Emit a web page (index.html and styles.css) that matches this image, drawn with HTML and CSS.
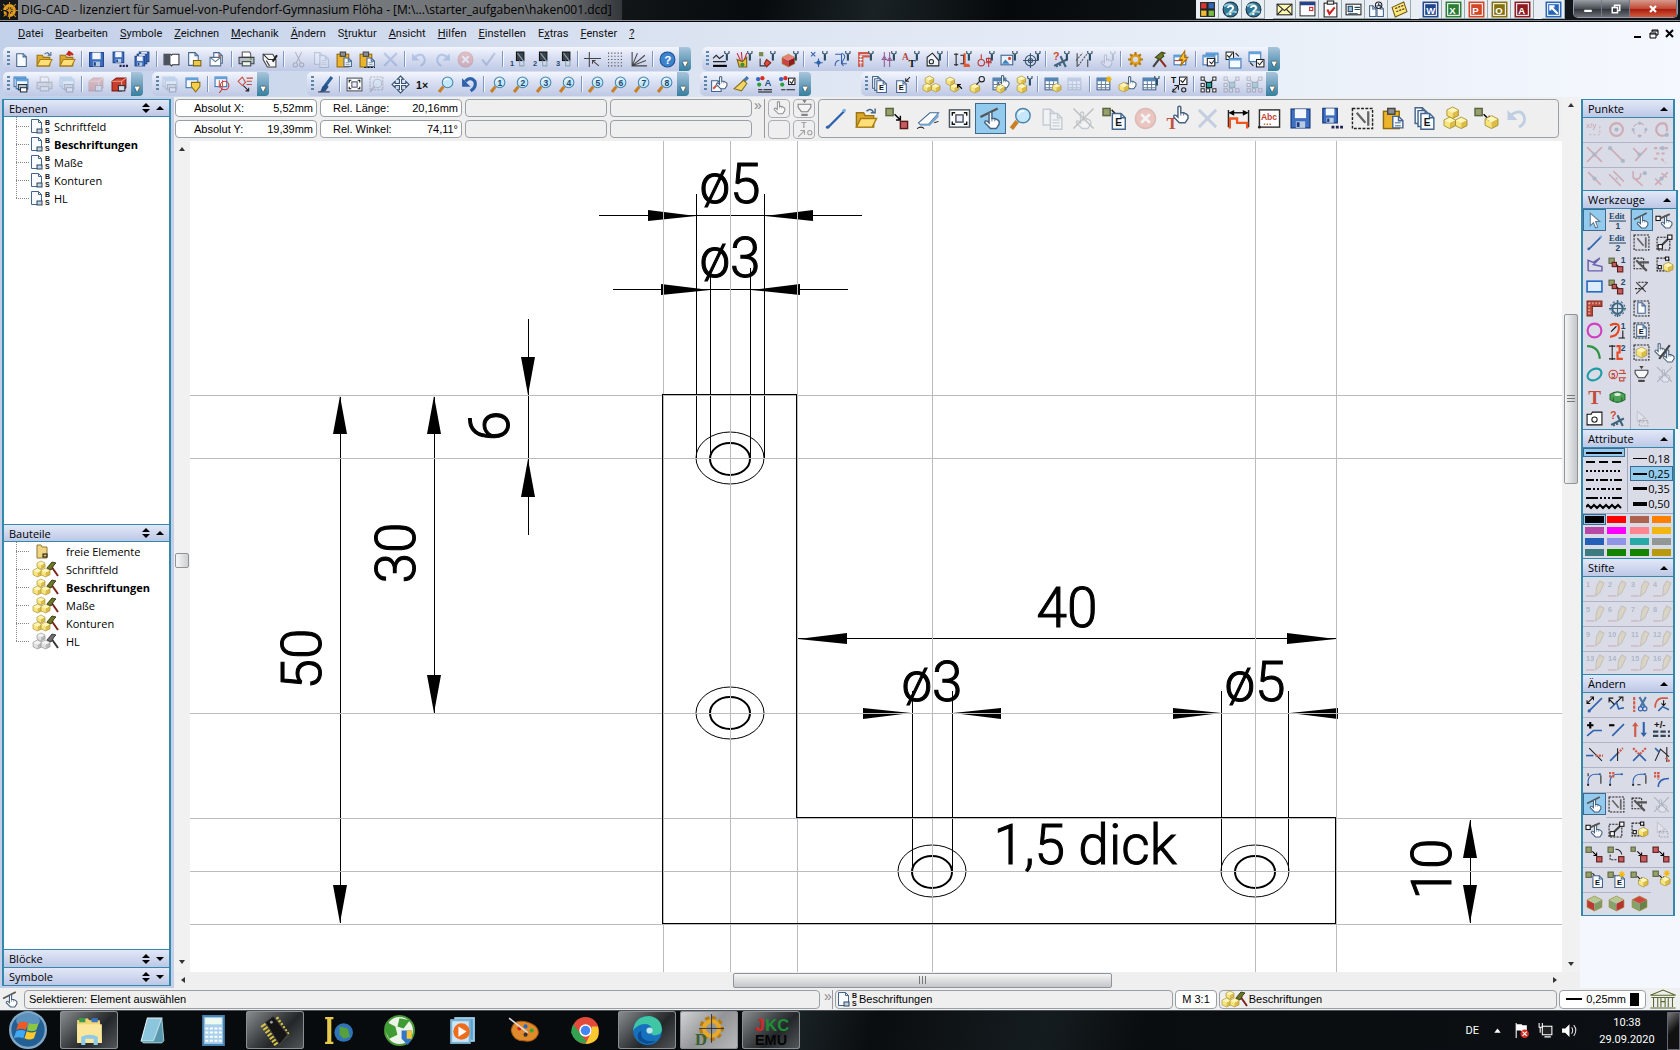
FILE: index.html
```html
<!DOCTYPE html>
<html lang="de">
<head>
    <meta charset="UTF-8">
    <meta name="viewport" content="width=device-width, initial-scale=1.0">
    <title>DIG-CAD - haken001.dcd</title>
    <link rel="stylesheet" href="styles.css">
</head>
<body>
    <header class="titlebar">
        <span class="app-icon" data-icons="gear"></span>
        <h1>DIG-CAD - lizenziert für Samuel-von-Pufendorf-Gymnasium Flöha - [M:\...\starter_aufgaben\haken001.dcd]</h1>
        <div class="office-bar" data-icons="office globe globe | mail2 calendar task card journal note | word excel ppoint outlook access | expand"></div>
        <div class="window-buttons">
            <button aria-label="Minimieren"><svg viewBox="0 0 16 16"><path d="M3 9h10v3H3z" fill="#fff"/></svg></button>
            <button aria-label="Wiederherstellen"><svg viewBox="0 0 16 16"><path d="M6 5V3h7v7h-2M3 6h7v7H3z" fill="none" stroke="#fff" stroke-width="2"/></svg></button>
            <button class="close" aria-label="Schließen"><svg viewBox="0 0 16 16"><path d="M4 4l8 8M12 4l-8 8" stroke="#fff" stroke-width="3"/></svg></button>
        </div>
    </header>

    <div class="chrome">
        <nav class="menubar">
            <a href="#"><u>D</u>atei</a>
            <a href="#"><u>B</u>earbeiten</a>
            <a href="#"><u>S</u>ymbole</a>
            <a href="#"><u>Z</u>eichnen</a>
            <a href="#"><u>M</u>echanik</a>
            <a href="#"><u>Ä</u>ndern</a>
            <a href="#">S<u>t</u>ruktur</a>
            <a href="#"><u>A</u>nsicht</a>
            <a href="#"><u>H</u>ilfen</a>
            <a href="#"><u>E</u>instellen</a>
            <a href="#">E<u>x</u>tras</a>
            <a href="#"><u>F</u>enster</a>
            <a href="#"><u>?</u></a>
            <div class="mdi-buttons">
                <button aria-label="Fenster minimieren"><svg viewBox="0 0 10 10"><path d="M1 8h7" stroke="#000" stroke-width="2"/></svg></button>
                <button aria-label="Fenster wiederherstellen"><svg viewBox="0 0 10 10"><path d="M3 3V1h6v5H7M1 4h6v5H1zM3 2h6M1 5h6" fill="none" stroke="#000"/></svg></button>
                <button aria-label="Fenster schließen"><svg viewBox="0 0 10 10"><path d="M1 1l7 7M8 1L1 8" stroke="#000" stroke-width="2"/></svg></button>
            </div>
        </nav>
        <div class="toolrow">
            <div class="strip" data-icons="new folder+over folder+overred | save savedots saveall | book pagefolder mail | print printcheck | ~cut ~copy paste paste+dots ~x | ~undo ~redo ~stop ~check | num:1 num:2 num:3 | axes grid angle | help"></div>
            <div class="strip gap-s" data-icons="lines+wrench paint+wrench move+wrench redcube+wrench | points+wrench curve+wrench ruler+wrench align+wrench fonts+wrench contour+wrench | dim+wrench weld+wrench picture+wrench target+wrench | askruler+wrench hatch+wrench ~hand+wrench | gearbig hammer flash | window windowup windowdown"></div>
        </div>
        <div class="toolrow">
            <div class="strip" data-icons="winprint ~print ~winprint | ~redbox redbox"></div>
            <div class="strip gap-xs" data-icons="~winprint shield | mapzoom asklines"></div>
            <div class="strip gap-m" data-icons="brush | fit ~zoomarea pan text1x zoom refresh | zoom:1 zoom:2 zoom:3 zoom:4 | zoom:5 zoom:6 zoom:7 zoom:8"></div>
            <div class="strip gap-s" data-icons="handpage broom colortext colorcheck"></div>
            <div class="strip gap-l" data-icons="pagesE pageE | cubes cubesarrow cubelink tablecube cubepair+wrench | tablepart ~table | tablenew handcube table+wrench | textcheck | nodes ~nodes ~nodes"></div>
        </div>
    </div>

    <main class="workspace">
        <aside class="sidebar">
            <section class="panel grow">
                <h2>Ebenen <span class="tools"><svg viewBox="0 0 22 10"><path d="M0 4l4-4 4 4zM0 6l4 4 4-4zM14 7l4-4 4 4z"/></svg></span></h2>
                <ul class="tree">
                    <li><span class="node" data-icons="layer"></span>Schriftfeld</li>
                    <li class="active"><span class="node" data-icons="layer"></span>Beschriftungen</li>
                    <li><span class="node" data-icons="layer"></span>Maße</li>
                    <li><span class="node" data-icons="layer"></span>Konturen</li>
                    <li><span class="node" data-icons="layer"></span>HL</li>
                </ul>
            </section>
            <section class="panel grow">
                <h2>Bauteile <span class="tools"><svg viewBox="0 0 22 10"><path d="M0 4l4-4 4 4zM0 6l4 4 4-4zM14 7l4-4 4 4z"/></svg></span></h2>
                <ul class="tree parts">
                    <li><span class="node" data-icons="partfolder"></span>freie Elemente</li>
                    <li><span class="node" data-icons="part"></span>Schriftfeld</li>
                    <li class="active"><span class="node" data-icons="part"></span>Beschriftungen</li>
                    <li><span class="node" data-icons="part"></span>Maße</li>
                    <li><span class="node" data-icons="part"></span>Konturen</li>
                    <li><span class="node gray" data-icons="part"></span>HL</li>
                </ul>
            </section>
            <section class="panel">
                <h2>Blöcke <span class="tools"><svg viewBox="0 0 22 10"><path d="M0 4l4-4 4 4zM0 6l4 4 4-4zM14 3l4 4 4-4z"/></svg></span></h2>
            </section>
            <section class="panel">
                <h2>Symbole <span class="tools"><svg viewBox="0 0 22 10"><path d="M0 4l4-4 4 4zM0 6l4 4 4-4zM14 3l4 4 4-4z"/></svg></span></h2>
            </section>
        </aside>

        <div class="editor">
            <div class="topbar">
                <div class="coords">
                    <label class="field">Absolut X:<input value="5,52mm" readonly></label>
                    <label class="field rel">Rel. Länge:<input value="20,16mm" readonly></label>
                    <span class="field empty"></span>
                    <span class="field empty"></span>
                    <label class="field">Absolut Y:<input value="19,39mm" readonly></label>
                    <label class="field rel">Rel. Winkel:<input value="74,11°" readonly></label>
                    <span class="field empty"></span>
                    <span class="field empty"></span>
                </div>
                <span class="more">»</span>
                <div class="minitools" data-icons="finger filter blank textcheckgray"></div>
                <div class="bigtools" data-icons="line folder+over blockmove eraser fit *select zoom ~copy ~nohand blockpage ~stop texthand ~x dimred abc save savedots dashsel paste pagesE cubes blockcube ~undo"></div>
            </div>
            <div class="ruler-scroll"><button class="arrow up" aria-label="Nach oben"></button><span class="slider"></span><button class="arrow down" aria-label="Nach unten"></button></div>
            <svg class="drawing" role="img" aria-label="Haken, 1,5 dick">
                <g transform="translate(-190 -141)">
                    <!-- holes -->
                    <g class="hole">
                        <ellipse cx="730" cy="458" rx="34" ry="26"/><ellipse cx="730" cy="713" rx="34" ry="26"/>
                        <ellipse cx="932" cy="871" rx="34" ry="26"/><ellipse cx="1255" cy="871" rx="34" ry="26"/>
                    </g>
                    <g class="hole bold">
                        <ellipse cx="730" cy="459" rx="20" ry="16"/><ellipse cx="730" cy="713" rx="20" ry="16"/>
                        <ellipse cx="932" cy="872" rx="20" ry="16"/><ellipse cx="1255" cy="872" rx="20" ry="16"/>
                    </g>
                    <!-- dimension and extension lines -->
                    <path class="edge" d="M599 215H862M613 289H848M696 194V458M764 194V458M710 270V458M750 268V458
                        M798 638H1336M912 691V871M952 691V871M1221 691V871M1288 691V871
                        M340 397V923M434 397V713M528 319V535M1470 820V923"/>
                    <!-- arrow heads -->
                    <path d="M648 210v11l48-5zM813 210v11l-48-5zM661 284v11l49-5zM800 284v11l-49-5z
                        M847 633v11l-49-5zM1287 633v11l49-5z
                        M863 708v11l48-6zM1001 708v11l-48-6zM1173 708v11l48-6zM1338 708v11l-48-6z
                        M333 434h14l-7-38zM333 885h14l-7 38zM427 434h14l-7-38zM427 675h14l-7 38z
                        M521 357h14l-7 38zM521 497h14l-7-38zM1463 858h14l-7-38zM1463 885h14l-7 38z"/>
                    <path class="guides" d="M190 395H4000M190 458H4000M190 713H4000M190 818H4000M190 871H4000M190 924H4000
                        M663 141V3000M730 141V3000M797 141V3000M932 141V3000M1255 141V3000M1336 141V3000"/>
                    <!-- part outline -->
                    <path class="edge" d="M662 394H796V817H1335V923H662Z"/>
                    <g class="cadtext">
                        <text x="730" y="203">ø5</text>
                        <text x="730" y="277">ø3</text>
                        <text x="1067" y="627">40</text>
                        <text x="932" y="701">ø3</text>
                        <text x="1255" y="701">ø5</text>
                        <text x="1085" y="864">1,5 dick</text>
                        <text transform="translate(321 659) rotate(-90)">50</text>
                        <text transform="translate(415 553) rotate(-90)">30</text>
                        <text transform="translate(509 426) rotate(-90)">6</text>
                        <text transform="translate(1451 869) rotate(-90)">10</text>
                    </g>
                </g>
            </svg>
            <div class="vscroll"><button class="arrow up" aria-label="Hoch"></button><span class="thumb"></span><button class="arrow down" aria-label="Runter"></button></div>
            <div class="hscroll"><button class="arrow left" aria-label="Links"></button><span class="thumb"></span><button class="arrow right" aria-label="Rechts"></button></div>
        </div>

        <aside class="palette">
            <section class="panel">
                <h2>Punkte <svg class="fold" viewBox="0 0 8 4"><path d="M0 4l4-4 4 4z"/></svg></h2>
                <div class="tools4" data-icons="~ptxy ~ptcircle ~ptquad ~ptarc ~ptcross ~ptline ~ptperp ~ptgrid ~ptmid ~ptpar ~pttan ~ptdiv"></div>
            </section>
            <section class="panel wide">
                <h2>Werkzeuge <svg class="fold" viewBox="0 0 8 4"><path d="M0 4l4-4 4 4z"/></svg></h2>
                <div class="pair">
                    <div class="tools2" data-icons="*cursor edit:1 line edit:2 poly blocks:1 rect blocks:2 corner gearring circle arcdim:1 arc stepdim:2 ellipse five text ring camera askruler"></div>
                    <div class="tools2" data-icons="*select selpt dashsel dashline dashcross dashcube cross blank dashpage blank dashE blank dashcube2 hands filter ~nohand blank blank ~cursorbox blank"></div>
                </div>
            </section>
            <section class="panel">
                <h2>Attribute <svg class="fold" viewBox="0 0 8 4"><path d="M0 4l4-4 4 4z"/></svg></h2>
                <div class="attributes">
                    <div class="linetypes">
                        <button class="on" aria-label="Volllinie"><svg viewBox="0 0 36 7"><path d="M0 4h36"/></svg></button>
                        <button aria-label="Strichlinie"><svg viewBox="0 0 36 7"><path d="M0 4h36" stroke-dasharray="9 4"/></svg></button>
                        <button aria-label="Punktlinie"><svg viewBox="0 0 36 7"><path d="M0 4h36" stroke-dasharray="2 2"/></svg></button>
                        <button aria-label="Strichpunktlinie"><svg viewBox="0 0 36 7"><path d="M0 4h36" stroke-dasharray="8 2 2 2"/></svg></button>
                        <button aria-label="Strich-Zweipunktlinie"><svg viewBox="0 0 36 7"><path d="M0 4h36" stroke-dasharray="5 2 2 2 2 2"/></svg></button>
                        <button aria-label="Strich-Dreipunktlinie"><svg viewBox="0 0 36 7"><path d="M0 4h36" stroke-dasharray="12 2 2 2 2 2 2 2"/></svg></button>
                        <button aria-label="Wellenlinie"><svg viewBox="0 0 36 7"><path d="M0 4l2-2 3 3 3-3 3 3 3-3 3 3 3-3 3 3 3-3 3 3 3-3 3 3"/></svg></button>
                    </div>
                    <div class="widths">
                        <button><i class="w1"></i>0,18</button>
                        <button class="on"><i class="w2"></i>0,25</button>
                        <button><i class="w3"></i>0,35</button>
                        <button><i class="w4"></i>0,50</button>
                    </div>
                </div>
                <div class="swatches" id="swatches"></div>
            </section>
            <section class="panel">
                <h2>Stifte <svg class="fold" viewBox="0 0 8 4"><path d="M0 4l4-4 4 4z"/></svg></h2>
                <div class="tools4" data-icons="~pen:1 ~pen:2 ~pen:3 ~pen:4 ~pen:5 ~pen:6 ~pen:7 ~pen:8 ~pen:9 ~pen:10 ~pen:11 ~pen:12 ~pen:13 ~pen:14 ~pen:15 ~pen:16"></div>
            </section>
            <section class="panel">
                <h2>Ändern <svg class="fold" viewBox="0 0 8 4"><path d="M0 4l4-4 4 4z"/></svg></h2>
                <div class="tools4" data-icons="stretch stretch2 cutline reshape addpt delpt updown plusminus trim trim2 trimx trimy fillet1 fillet2 fillet3 fillet4 *select dashsel dashcross ~nohand selpt dashline dashcube ~cursorbox blockmove blockrot blocksmall blockred blockpage blockstar blockcube blockcubestar cubeleft cuberight cubetop"></div>
            </section>
        </aside>
    </main>

    <footer class="statusbar">
        <span class="status-icon" data-icons="select"></span>
        <span class="field message">Selektieren: Element auswählen</span>
        <span class="more">»</span>
        <span class="field half"><span class="node" data-icons="layer"></span>Beschriftungen</span>
        <span class="field white scale">M 3:1</span>
        <span class="field half"><span class="node" data-icons="part"></span>Beschriftungen</span>
        <span class="field white pen"><i class="w2"></i>0,25mm<b></b></span>
        <span class="temple" data-icons="temple"></span>
    </footer>

    <div class="taskbar">
        <div class="apps" data-icons="orb *explorer notepad calc *chip globebook soccer media palette chrome *edge *digcad *jkc"></div>
        <div class="tray">
            <span class="lang">DE</span>
            <div class="tray-icons" data-icons="trayup flag network sound"></div>
            <time datetime="2020-09-29T10:38">10:38<br>29.09.2020</time>
            <button class="desktop" aria-label="Desktop anzeigen"></button>
        </div>
    </div>
    <script src="toolbars.js"></script>
</body>
</html>
```
FILE: styles.css
```css
:root {
    --teal: #3388ac;
    --blue-mid: #c3cfe9;
    --face: #efefef;
    --palette: #d9dbe7;
    --select: #93cbee;
}

* {
    margin: 0;
    padding: 0;
    box-sizing: border-box;
}

body {
    display: flex;
    flex-direction: column;
    height: 100vh;
    overflow: hidden;
    font-family: "Liberation Sans", Arial, sans-serif;
    font-size: 11px;
    color: #000;
    background: #f4f7fd;
}

button {
    border: 0;
    background: none;
    font: inherit;
    color: inherit;
    display: flex;
    align-items: center;
    justify-content: center;
}

svg {
    display: block;
}

[data-icons] svg {
    width: 17px;
    height: 17px;
    flex: none;
    overflow: visible;
}

.off svg {
    opacity: 0.25;
}

/* title bar */
.titlebar {
    display: flex;
    align-items: flex-start;
    height: 22px;
    flex: none;
    background: linear-gradient(100deg, #14181b 35%, #070a0c 45%, #1a2226 52%, #06090b 60%, #10161a 75%);
    border-bottom: 1px solid #000;
    box-shadow: inset 0 -1px 0 #8b9096;
}

.app-icon {
    padding: 2px 0 0 1px;
    width: 18px;
}

.titlebar h1 {
    flex: none;
    padding: 0 10px 0 3px;
    font-family: "Open Sans", sans-serif;
    font-size: 12px;
    line-height: 20px;
    font-weight: 400;
    background: linear-gradient(90deg, #85898d, #6d7073 90%, #33373a);
}

.office-bar {
    display: flex;
    margin-left: auto;
    margin-right: 8px;
    height: 19px;
    background: #e9eef4;
}

.office-bar button {
    width: 23px;
    border-right: 1px solid #9aa;
    border-bottom: 1px solid #9aa;
}

.office-bar .sep {
    width: 8px;
}

.window-buttons {
    display: flex;
    border: 1px solid #99a;
    border-top: 0;
    border-radius: 0 0 5px 5px;
    overflow: hidden;
    margin-right: 2px;
}

.window-buttons button {
    width: 28px;
    height: 17px;
    background: linear-gradient(#9a9fa5, #4a4f55 50%, #30343a 52%, #6b7076);
    border-right: 1px solid #778;
}

.window-buttons .close {
    width: 47px;
    background: linear-gradient(#d89a8e, #c24a35 50%, #a51a0c 52%, #d25a3c);
}

.window-buttons svg {
    width: 12px;
    height: 12px;
}

/* menu and toolbars */
.chrome {
    flex: none;
    background: linear-gradient(90deg, #c2d0e9, #dde5f2 45%, #e9eff8 75%, #f5f8fe);
}

.menubar {
    display: flex;
    align-items: center;
    gap: 12px;
    height: 25px;
    padding: 0 5px 2px 18px;
    font-family: "Roboto", sans-serif;
    background: radial-gradient(circle at 7px 50%, transparent, transparent);
}

.menubar a {
    color: #111;
    text-decoration: none;
}

.mdi-buttons {
    display: flex;
    gap: 6px;
    margin-left: auto;
}

.mdi-buttons svg {
    width: 10px;
    height: 10px;
}

.toolrow {
    display: flex;
    padding: 0 0 1px 3px;
}

.strip {
    display: flex;
    align-items: center;
    height: 24px;
    flex: none;
    padding-left: 7px;
    background: linear-gradient(#f3f6fd, #dbe1f3 40%, #bfc9e5);
    border-radius: 5px;
}

.strip::before {
    content: "";
    width: 3px;
    height: 16px;
    margin: 0 0 0 -3px;
    background: repeating-linear-gradient(#5c85aa 0 2px, transparent 2px 4px);
}

.strip::after {
    content: "\25be";
    width: 12px;
    height: 24px;
    line-height: 34px;
    text-align: center;
    font-family: "DejaVu Sans", sans-serif;
    color: #fff;
    background: linear-gradient(#a9c5dc, #357f9f);
    border-radius: 0 4px 4px 0;
    text-shadow: 0 0 1px #000, 0 0 1px #000;
}

.gap-xs { margin-left: 9px; }
.gap-s { margin-left: 11px; }
.gap-m { margin-left: 38px; }
.gap-l { margin-left: 50px; }

.strip button {
    width: 23px;
    height: 22px;
}

.strip .sep {
    width: 2px;
    height: 16px;
    margin: 0 2px;
    border-left: 1px solid #7f97bd;
    border-right: 1px solid #f5f8ff;
}

/* work area */
.workspace {
    flex: 1;
    min-height: 0;
    display: grid;
    grid-template-columns: 174px minmax(0, 1fr) 100px;
}

.sidebar {
    display: flex;
    flex-direction: column;
    padding: 2px 3px 2px 2px;
    background: var(--blue-mid);
}

.panel {
    display: flex;
    flex-direction: column;
    border: 2px solid var(--teal);
    border-width: 1px 2px 0;
    background: #fff;
}

.sidebar .panel:last-child,
.palette .panel:last-child {
    border-bottom-width: 1px;
}

.grow {
    flex: 1;
}

.panel h2 {
    display: flex;
    align-items: center;
    justify-content: space-between;
    height: 18px;
    flex: none;
    padding: 0 5px;
    font-family: "Open Sans", sans-serif;
    font-size: 11px;
    font-weight: 400;
    background: linear-gradient(#e2e8f8, #bdc8e6);
    border-bottom: 1px solid var(--teal);
}

.sidebar .panel h2 {
    height: 17px;
}

.sidebar .panel:nth-last-child(-n+2) h2 {
    border-bottom: 0;
}

.tools svg {
    width: 22px;
    height: 10px;
}

.fold {
    width: 8px;
    height: 4px;
}

.tree {
    list-style: none;
    font-family: "Open Sans", sans-serif;
    font-size: 11px;
}

.tree li {
    display: flex;
    align-items: center;
    height: 18px;
    padding-left: 12px;
    background:
        repeating-linear-gradient(#888 0 1px, transparent 1px 2px) 12px 0 / 1px 100% no-repeat,
        repeating-linear-gradient(90deg, #888 0 1px, transparent 1px 2px) 12px 9px / 14px 1px no-repeat;
}

.tree li:last-child {
    background-size: 1px 9px, 14px 1px;
}

.tree .active {
    font-weight: 700;
}

.tree .node {
    width: 38px;
    padding-left: 14px;
}

.parts .node {
    width: 50px;
    padding-left: 17px;
}

.node svg,
.tree .node svg {
    width: 22px;
    height: 16px;
}

.parts .node svg {
    width: 26px;
}

.gray {
    filter: grayscale(1);
}

.editor {
    display: grid;
    grid-template-columns: 16px minmax(0, 1fr) 18px;
    grid-template-rows: 44px minmax(0, 1fr) 16px;
    background: var(--face);
}

.topbar {
    grid-column: 1 / 3;
    display: flex;
    padding: 2px 3px 3px 1px;
}

.coords {
    display: grid;
    grid-template-columns: repeat(4, 142px);
    gap: 3px;
    flex: none;
}

.field {
    display: flex;
    align-items: center;
    border: 1px solid #9a9fa5;
    border-radius: 4px;
    background: #fff;
}

.coords .field {
    padding: 0 3px 0 18px;
}

.coords .rel {
    padding-left: 12px;
}

.coords input {
    flex: 1;
    min-width: 0;
    border: 0;
    background: none;
    text-align: right;
    font: inherit;
    outline: 0;
}

.field.empty {
    background: var(--face);
}

.more {
    width: 13px;
    padding-left: 2px;
    font-size: 14px;
    line-height: 12px;
    color: #888;
    border-right: 1px solid #999;
    flex: none;
}

.minitools {
    display: grid;
    grid-template-columns: 22px 22px;
    gap: 2px 3px;
    padding: 0 3px;
    flex: none;
}

.minitools button {
    border: 1px solid #9a9fa5;
    border-radius: 4px;
    opacity: 0.8;
}

.minitools svg {
    filter: grayscale(1);
    opacity: 0.8;
}

.bigtools {
    flex: 1;
    min-width: 0;
    overflow: hidden;
    display: flex;
    align-items: center;
    border: 1px solid #9a9fa5;
    border-radius: 4px;
    padding-left: 1px;
}

.bigtools button {
    width: 31px;
    height: 31px;
    flex: none;
}

.bigtools svg {
    width: 23px;
    height: 23px;
}

button.on {
    background: var(--select);
    box-shadow: inset 0 0 0 1px #3f6a8c;
}

.ruler-scroll,
.vscroll {
    display: flex;
    flex-direction: column;
    align-items: center;
    justify-content: space-between;
    background: #f1f1f1;
}

.ruler-scroll {
    padding-bottom: 2px;
}

.slider {
    width: 14px;
    height: 15px;
    margin-top: 10px;
    border: 1px solid #8f9499;
    border-radius: 2px;
    background: linear-gradient(90deg, #f8f8f8, #cfcfd4);
}

.arrow {
    width: 15px;
    height: 16px;
}

.arrow::before {
    content: "";
    border: 3px solid transparent;
}

.arrow.up::before { border-bottom: 4px solid #333; border-top: 0; }
.arrow.down::before { border-top: 4px solid #333; border-bottom: 0; }
.arrow.left::before { border-right: 4px solid #333; border-left: 0; }
.arrow.right::before { border-left: 4px solid #333; border-right: 0; }

.drawing {
    width: 100%;
    height: 100%;
    background: #fff;
    overflow: hidden;
}

.edge {
    fill: none;
    stroke: #000;
    shape-rendering: crispEdges;
}

.hole {
    fill: none;
    stroke: #000;
}

.hole.bold {
    stroke-width: 2;
}

.guides {
    fill: none;
    stroke: #bcbcc0;
    shape-rendering: crispEdges;
}

.cadtext {
    font-family: "Roboto", sans-serif;
    font-weight: 300;
    font-size: 55px;
    text-anchor: middle;
    stroke: #000;
    stroke-width: 1px;
}

.vscroll {
    grid-column: 3;
    grid-row: 1 / 3;
    justify-content: flex-start;
}

.vscroll .arrow.down {
    margin-top: auto;
}

.thumb {
    border: 1px solid #8f9499;
    border-radius: 2px;
}

.vscroll .thumb {
    width: 14px;
    height: 170px;
    margin-top: 201px;
    background:
        repeating-linear-gradient(#777 0 1px, transparent 1px 3px) center / 8px 8px no-repeat,
        linear-gradient(90deg, #f5f5f5, #c5c6ca);
}

.hscroll {
    grid-column: 1 / 3;
    display: flex;
    align-items: center;
}

.hscroll .left {
    margin-right: 39%;
    width: 18px;
}

.hscroll .thumb {
    width: 379px;
    height: 15px;
    background:
        repeating-linear-gradient(90deg, #777 0 1px, transparent 1px 3px) center / 8px 8px no-repeat,
        linear-gradient(#f5f5f5, #c5c6ca);
}

.hscroll .right {
    margin-left: auto;
}

/* right palettes */
.palette {
    padding: 2px 2px 0 1px;
    background: #f4f7fe;
}

.palette .panel {
    width: 94px;
    background: var(--palette);
}

.palette .panel.wide {
    width: 97px;
}

.tools4 {
    display: grid;
    grid-template-columns: repeat(4, 1fr);
    grid-auto-rows: 25px;
    margin-bottom: -3px;
}

.tools4 button {
    height: 25px;
    border-bottom: 1px solid #b2b4c6;
    padding-bottom: 2px;
}

.tools4 button.on {
    height: 22px;
    border-bottom: 0;
    padding: 0;
}

.tools4 button:nth-last-child(-n+4) {
    height: 22px;
    border-bottom: 0;
}

.pair {
    display: grid;
    grid-template-columns: 1fr 1fr;
}

.tools2 {
    display: grid;
    grid-template-columns: 1fr 1fr;
    grid-auto-rows: 22px;
}

.tools2 + .tools2 {
    border-left: 1px solid #a4a7bd;
}

.attributes {
    display: grid;
    grid-template-columns: 45px 1fr;
    padding-bottom: 1px;
    border-bottom: 1px solid #a4a7bd;
    height: 66px;
}

.linetypes {
    border-right: 1px solid #a4a7bd;
}

.linetypes button {
    width: 42px;
    height: 9px;
}

.linetypes svg {
    width: 36px;
    height: 7px;
    fill: none;
    stroke: #000;
    stroke-width: 2;
}

.widths {
    padding: 3px 0 0 2px;
    font-family: "Open Sans", sans-serif;
}

.widths button {
    width: 43px;
    height: 15px;
    gap: 1px;
}

.w1, .w2, .w3, .w4 {
    width: 14px;
    height: 1px;
    background: #000;
}

.w2 { height: 2px; }
.w3 { height: 3px; }
.w4 { height: 4px; }

.swatches {
    display: grid;
    grid-template-columns: repeat(4, 1fr);
    grid-auto-rows: 11px;
}

.swatches button::before {
    content: "";
    width: 19px;
    height: 7px;
    background: var(--pen);
}

/* status bar */
.statusbar {
    display: flex;
    align-items: center;
    gap: 2px;
    height: 22px;
    flex: none;
    padding: 1px 2px;
    background: var(--face);
}

.statusbar .field {
    height: 19px;
    background: var(--face);
    padding: 0 4px;
    gap: 4px;
}

.statusbar .field.white {
    background: #fff;
}

.status-icon {
    width: 20px;
}

.message {
    width: 796px;
    flex: 0 1 auto;
}

.statusbar .half {
    flex: 1;
    padding-left: 1px;
    gap: 0;
}

.statusbar .half + .white {
    padding: 0 6px;
}

.statusbar .white + .half .node svg {
    width: 28px;
}

.statusbar .more {
    width: 11px;
    height: 19px;
}

.pen {
    width: 87px;
}

.pen i {
    width: 23px;
}

.pen b {
    width: 13px;
    height: 13px;
    margin-left: auto;
    background: #000;
}

.temple svg {
    width: 30px;
    height: 20px;
}

/* taskbar */
.taskbar {
    display: flex;
    justify-content: space-between;
    height: 40px;
    flex: none;
    background: linear-gradient(105deg, #080b0e 45%, #1b2326 47%, #0a0d10 52%, #151c1f 62%, #0a0d10 68%, #0c0f13);
    border-top: 1px solid #4b5158;
    color: #fff;
    font-family: "Roboto", sans-serif;
}

.apps {
    display: flex;
    gap: 4px;
}

.apps button {
    width: 58px;
    height: 38px;
    border-radius: 3px;
}

.apps button:first-child {
    width: 56px;
}

.apps button.on {
    background: linear-gradient(135deg, #8d9093, #3b3e41 45%, #24272a 60%, #55585b);
    box-shadow: inset 0 0 0 1px #8b8f93;
}

.apps button.on:nth-child(12) {
    background: linear-gradient(135deg, #d5d6d7, #929496 50%, #b9babb);
}

.apps svg {
    width: 33px;
    height: 33px;
}

.apps button:first-child svg {
    width: 38px;
    height: 38px;
}

.tray {
    display: flex;
    align-items: center;
}

.tray-icons {
    display: flex;
    padding: 0 12px 0 6px;
}

.tray-icons button {
    width: 24px;
}

.tray time {
    width: 68px;
    text-align: center;
    line-height: 17px;
}

.desktop {
    width: 13px;
    height: 38px;
    margin-left: 6px;
    border: 1px solid #667;
    background: linear-gradient(135deg, #777, #111 50%);
}
```
FILE: toolbars.js
```js
// small drawing helpers, everything sits on a 16x16 field
const line = (d, color = '#222', w = 1) => `<path d="${d}" fill="none" stroke="${color}" stroke-width="${w}"/>`;
const dashed = (d, color = '#222', w = 1, gaps = '2 1') => `<path d="${d}" fill="none" stroke="${color}" stroke-width="${w}" stroke-dasharray="${gaps}"/>`;
const fill = (d, color, edge = 'none', w = 1) => `<path d="${d}" fill="${color}" stroke="${edge}" stroke-width="${w}"/>`;
const dot = (x, y, r, color, edge = 'none') => `<circle cx="${x}" cy="${y}" r="${r}" fill="${color}" stroke="${edge}"/>`;
const ring = (x, y, r, color, w = 1) => `<circle cx="${x}" cy="${y}" r="${r}" fill="none" stroke="${color}" stroke-width="${w}"/>`;
const box = (x, y, w, h, color, edge = 'none') => `<rect x="${x}" y="${y}" width="${w}" height="${h}" fill="${color}" stroke="${edge}"/>`;
const word = (x, y, s, size = 8, color = '#111', face = 'Liberation Sans') =>
    `<text x="${x}" y="${y}" font-size="${size}" font-weight="bold" fill="${color}" font-family="${face}">${s}</text>`;
const dash = (x, y, w, h) => dashed(`M${x} ${y}h${w}v${h}h${-w}z`);
const cube = (x, y, s, a = '#f7e47a', b = '#dcbc44', top = '#fff6b4') =>
    fill(`M${x} ${y + s / 4}l${s / 2} ${s / 4}v${s / 2}l${-s / 2} ${-s / 4}z`, a) +
    fill(`M${x + s} ${y + s / 4}l${-s / 2} ${s / 4}v${s / 2}l${s / 2} ${-s / 4}z`, b) +
    fill(`M${x + s / 2} ${y}l${s / 2} ${s / 4}l${-s / 2} ${s / 4}l${-s / 2} ${-s / 4}z`, top) +
    fill(`M${x + s / 2} ${y}l${s / 2} ${s / 4}v${s / 2}l${-s / 2} ${s / 4}l${-s / 2} ${-s / 4}v${-s / 2}z`, 'none', '#a58a2a', .6);

const page = (x, y, w = 8, h = 11) => fill(`M${x} ${y}h${w - 3}l3 3v${h - 3}h${-w}z`, '#f8fbff', '#44658c') + line(`M${x + w - 3} ${y}v3h3`, '#44658c');
const pageE = (x, y) => page(x, y, 9, 11) + word(x + 2, y + 9, 'E', 7);
const hand = (x, y) => `<g transform="translate(${x} ${y})">` +
    fill('M3 1q1-1 2 0v4l2 0 2 1 1 1v2l-2 3H4L0 8q0-2 2-1l1 1z', '#fff', '#46627e') + line('M5 5v2M7 5v2', '#46627e', .6) + '</g>';
const floppy = (x, y, s) => box(x, y, s, s, '#3f6fc0', '#1f4288') + box(x + s * .2, y, s * .6, s * .48, '#f3f7fc') + box(x + s * .25, y + s * .65, s * .5, s * .35, '#b9cbe0') + box(x + s * .3, y + s * .7, s * .15, s * .25, '#1c3c80');
const star = (x, y) => line(`M${x - 3} ${y}h6M${x} ${y - 3}v6M${x - 2} ${y - 2}l4 4M${x + 2} ${y - 2}l-4 4`, '#f5b800');
const blue = '#2f62ad';
const red = '#cf5a48';
const green = '#96a06c';
const rose = '#c65c60';
const blockA = box(0, 1, 5, 5, green, '#5c6440');
const blockArrow = line('M6 5l4 4M10 6v3h-3', '#000');
const windowBox = (x, y) => box(x, y, 11, 9, '#f7fbff', '#3873b4') + box(x, y, 11, 2, '#5fa3dc');
const tableBox = box(1, 2, 12, 11, '#fff', '#40658c') + box(1, 2, 12, 3, '#5385b7') + line('M1 8h12M1 11h12M5 5v8M9 5v8', '#68819b');
const tile = (color, s) => box(1, 1, 14, 14, color, color) + box(2.5, 2.5, 11, 11, 'none', '#fff') + word(4, 12, s, 9, '#fff');
const threeCubes = cube(2, 0, 8) + cube(0, 7, 8) + cube(8, 7, 8);
const lens = line('M1 15l4-5', '#c97f25', 3) + dot(9, 6, 5, '#c4e8fa', '#4a86ad') + line('M6 5q1-3 4-2', '#fff');
const fillet = line('M2 14V9Q3 3 9 3h5', blue, 1) + dot(2, 13, 1, '#222') + dot(13, 3, 1, blue);
const dottedRed = dashed('M1 2h6M1 5h6', red, 2, '2 1');
const floppyDots = dashed('M8 14h8', '#225', 2, '2 1');

const icons = {
    blank: '',
    gear: ring(8, 8, 4.5, '#e5a325', 3) + line('M8 0v16M0 8h16M2 2l12 12M14 2L2 14', '#d18d1a', 1) + word(0, 15, 'D', 10, '#111'),
    gearbig: ring(8, 8, 4, '#e0a020', 3) + line('M8 1v3M8 12v3M1 8h3M12 8h3M3 3l2 2M11 11l2 2M13 3l-2 2M5 11l-2 2', '#b47b10', 2),
    new: page(3.5, 2.5, 9, 12),
    folder: fill('M1 14V4h5l1 2h6v8z', '#dca92c', '#9b7415') + fill('M1 14l3-6h11l-3 6z', '#ffdf78', '#a67c16'),
    over: line('M8 3q3-3 5 1M14 1v3h-3', '#44668c'),
    overred: line('M8 3q3-3 5 1M10 0L8 3l3 1', '#c42a1c', 2),
    save: floppy(1.5, 1.5, 13),
    savedots: floppy(2, 1, 10) + floppyDots,
    saveall: floppy(5, 1, 9) + floppy(3, 3, 9) + floppy(1, 5, 9),
    book: fill('M1 3h6l1 1 1-1h6v10H9l-1 1-1-1H1z', '#fff', '#333') + box(1, 3, 6, 10, '#4b535c'),
    pagefolder: page(2.5, 1.5, 9, 12) + fill('M7 9h7v5H7z', '#f0c850', '#7b6518'),
    mail: page(4.5, 1.5, 8, 10) + fill('M1 6h10v8H1z', '#fff', '#55708f') + line('M1 6l5 4 5-4', '#55708f') + box(9, 4, 2, 2, red),
    print: fill('M4 6V1h7l1 2v3z', '#fff', '#555') + fill('M1 6h14v6H1z', '#b9bec6', '#3c4248') + box(4, 10, 8, 4, '#e9f5e9', '#3c4248') + box(11, 7, 2, 1, '#36a02c'),
    printcheck: fill('M2 3h9l3 5v7H6L2 8z', '#f7f7f7', '#444') + line('M2 3l5 5h7M5 9l3 5', '#333') + line('M15 4l-4 6', '#222', 2),
    cut: line('M5 1l5 10M11 1L6 11', '#333') + ring(5, 13, 2, '#333') + ring(11, 13, 2, '#333'),
    copy: page(1.5, 1.5) + page(6.5, 4.5) + line('M8 9h5M8 11h5M8 13h5', '#7d94ad'),
    paste: box(1, 3, 11, 12, '#eab42c', '#926b0c') + box(4, 1, 5, 4, '#8b8f95', '#444') + page(7.5, 6.5, 7, 8) + line('M9 11h4M9 13h4', '#7d94ad'),
    dots: dashed('M5 15.5h10', '#111'),
    x: line('M2 2l12 12M14 2L2 14', '#4b6eb5', 2),
    undo: line('M3 6q8-6 10 2 0 4-4 6', '#3870bd', 2) + fill('M1 2v7h7z', '#3870bd'),
    redo: line('M13 6q-8-6-10 2 0 4 4 6', '#3870bd', 2) + fill('M15 2v7H8z', '#3870bd'),
    stop: dot(8, 8, 7, '#dd4632', '#a32415') + line('M5 5l6 6M11 5l-6 6', '#fff', 2),
    check: line('M2 8l4 5 8-11', '#44659c', 2),
    num: box(7, 1, 7, 8, '#39424a', '#111') + line('M8 2l6 8M10 9v5h4V9', '#8fa5b6', 1),
    axes: line('M5 1v14M0 7h16M8 9l6 5M8 12V9h3', '#444'),
    grid: [2, 5, 8, 11, 14].map(y => `<path d="M1 ${y}h15" stroke="#444" stroke-dasharray="1 2"/>`).join(''),
    angle: line('M2 1v13h14M2 14L7 2M2 14L14 4M2 14l13-5', '#444'),
    help: dot(8, 8, 7, '#3b82cf', '#1c508f') + word(5, 12, '?', 11, '#fff'),
    wrench: line('M14 3v6', '#274a60', 2) + line('M12 0v2l2 1 2-1V0', '#274a60', 1),
    lines: line('M1 7l3-3 3 3 4-3M1 10h12', '#222') + line('M1 14h13', '#000', 2),
    paint: line('M2 2l5 11M11 2L7 13M6 1l1 11', '#c23', 1) + fill('M2 8l5 2 4-4v9H4z', '#e8c53a', '#735b10') + dot(7, 13, 2, '#388e3c'),
    move: box(1, 1, 4, 4, '#7b8a4c') + line('M2 7v7h5', '#333') + fill('M8 8l4 3-4 4-2-3z', '#d94f3f', '#802217'),
    redcube: cube(1, 3, 12, '#c94442', '#8e1c1c', '#e88078'),
    points: line('M1 1l4 4M5 1L1 5', blue) + line('M8 7v8M4 11h8', blue) + dot(8, 11, 2, blue),
    curve: line('M2 3h6v9h5', blue) + line('M2 14q0-5 4-5 M8 2q5 2 2 6t0 6', blue),
    ruler: line('M3 15V2h9M6 15V5h7', red, 2) + line('M3 5h3M3 8h3M3 11h3', '#fff'),
    align: line('M5 1v14M10 1v14M3 8l2-3 2 3zM8 9l2-3 2 3z', '#945a94'),
    fonts: word(0, 8, 'A', 9, '#b84437', 'Liberation Serif') + word(6, 15, 'T', 10, '#111', 'Liberation Serif'),
    contour: fill('M2 14V6l5-4 6 7v5z', '#eef4fa', '#222') + ring(6, 10, 2, '#222'),
    dim: line('M2 2v12M0 3h4M0 13h4M6 4h3v8H6', '#222') + line('M10 2v12h5M10 13h4', '#e05a30', 2),
    weld: line('M4 8V3M8 11h6M11 6v9', '#b33') + ring(4, 11, 3, '#b33') + box(9, 7, 4, 3, 'none', '#b33'),
    picture: box(1, 4, 11, 9, '#eaf4ff', '#3a648b') + dot(9, 7, 1.5, '#e04030') + fill('M2 12l3-4 4 4z', '#3b7dbd'),
    target: ring(7, 9, 5, '#35536b') + ring(7, 9, 2, '#35536b') + line('M7 2v14M0 9h14', '#35536b'),
    askruler: word(1, 8, '?', 10, '#d4482c') + line('M2 14L14 8M8 5l5 10M4 13l1 2M7 12l1 2', '#42637c', 2),
    hatch: line('M2 2v13M12 8v7', '#444') + dashed('M3 14L11 3M1 9l6-7', '#555'),
    hand: hand(3, 3),
    hammer: line('M3 15l6-8', '#444', 2) + line('M8 6l7 9', '#8c2f24', 2) + fill('M5 6l6-5 3 1-2 1 1 2-4 3z', '#6c7b28', '#3c4618'),
    flash: windowBox(1, 4) + line('M1 9h12', '#a44') + fill('M11 0L6 8h3l-2 6 7-8h-3z', '#ffc531', '#b06c00'),
    window: windowBox(4, 2) + windowBox(1, 4) + box(5, 7, 7, 7, '#fff', '#222') + line('M7 10l2 2 3-4'),
    windowup: box(1, 1, 7, 7, '#fff', '#222') + line('M2 4l2 2 3-4M10 2l3 3') + windowBox(4, 7),
    windowdown: windowBox(1, 1) + box(8, 8, 7, 7, '#fff', '#222') + line('M9 11l2 2 3-4M2 11l3 3'),
    winprint: windowBox(1, 1) + windowBox(3, 3) + box(5, 8, 8, 5, '#b8c1ca', '#234') + box(7, 11, 6, 4, '#fff', '#234'),
    redbox: fill('M1 5l4-3h9v9l-4 3H1z', '#ca3d2b', '#831c10') + line('M1 5h9v9M10 5l4-3', '#f0a090') + box(7, 9, 6, 5, '#d5dce4', '#234'),
    shield: windowBox(1, 2) + fill('M6 6h8v4l-4 5-4-5z', '#f4cf4c', '#8b6d15'),
    mapzoom: windowBox(1, 1) + line('M5 4v7M8 4v7', red) + ring(10, 9, 4, '#c33') + line('M8 12l-3 4', '#c33'),
    asklines: line('M1 5l4-4 3 5-3 3z M9 2h6M9 5h5M9 8h5', '#c54b3a') + line('M6 9l5 5M11 11v3H8', '#222'),
    brush: line('M14 1L8 9', '#2b5f9e', 3) + fill('M8 7l3 3-3 4-5 1 2-5z', '#27518a') + line('M1 15h11', '#234'),
    fit: box(1, 2, 14, 12, '#fff', '#4a555f') + box(5.5, 5.5, 5, 5, '#eef', '#4a555f') + line('M3 6V4h2M11 4h2v2M13 10v2h-2M5 12H3v-2', '#111'),
    zoomarea: dash(1, 1, 12, 12) + dot(8, 7, 4, '#c4e8fa', '#555') + line('M5 10l-4 5', '#555', 2),
    pan: fill('M8 0l3 3H9v4h4V5l3 3-3 3V9H9v4h2l-3 3-3-3h2V9H3v2L0 8l3-3v2h4V3H5z', '#f6faff', '#33506e'),
    text1x: word(1, 12, '1×', 10),
    zoom: lens,
    refresh: line('M4 5q5-5 9 0 2 6-4 9', blue, 3) + fill('M1 2v8h8z', blue),
    handpage: page(1.5, 4.5, 9, 10) + hand(6, 0) + line('M3 12l3-3', red, 2),
    broom: line('M14 1L9 6', '#4778a6', 3) + fill('M10 4l3 3-5 7-7-2z', '#f0d668', '#8b7120'),
    colortext: dot(3, 8, 2, '#2c9c3c') + dot(6, 2, 2, '#e02c20') + dot(2, 3, 2, '#3468c4') + word(8, 9, 'A', 9, '#27558b') + line('M2 13h4M7 13h8M2 15h13', '#111'),
    colorcheck: dot(3, 8, 2, '#2c9c3c') + dot(6, 2, 2, '#e02c20') + dot(2, 3, 2, '#3468c4') + box(9, 2, 6, 6, '#fff', '#222') + line('M10 5l2 2 2-4M2 13h4M7 13h8'),
    pagesE: page(1.5, .5) + page(3.5, 2.5) + pageE(5.5, 4.5),
    pageE: pageE(2.5, 4.5) + line('M15 1l-4 4M11 2v3h3'),
    cubes: threeCubes,
    cubesarrow: cube(0, 1, 8) + cube(4, 7, 8) + line('M15 12l-4-4M11 11V8h3', '#000'),
    cubelink: cube(1, 7, 9) + ring(12, 3, 2.5, '#222') + line('M10 5L7 8'),
    tablecube: tableBox + hand(6, -1) + cube(4, 8, 8),
    cubepair: cube(2, 0, 8) + cube(2, 7, 9),
    tablepart: tableBox + cube(8, 7, 8),
    table: tableBox,
    tablenew: tableBox + star(12, 3),
    handcube: hand(6, 0) + cube(0, 6, 9),
    textcheck: word(0, 7, 'T', 8) + box(8, 1, 7, 7, '#fff', '#222') + line('M9 4l2 2 3-4M1 15l6-6M3 9h4v4M2 12v3h3') + ring(12, 13, 2, '#222'),
    textcheckgray: word(5, 7, 'T', 8, '#777') + line('M2 15l6-6M4 9h4v4', '#777') + ring(13, 11, 2, '#777'),
    nodes: line('M8 8L3 3M8 8l5-5', '#333') + box(6, 6, 5, 5, '#17a89a', '#111') + [[1, 1], [12, 1], [1, 7], [1, 12], [6, 12], [12, 12]].map(p => box(p[0], p[1], 3, 3, '#fff', '#333')).join(''),

    finger: hand(3, 1),
    filter: fill('M2 4h12v3l-3 4H5L2 7z', '#f6f8fb', '#444') + fill('M6 0h4L8 3z', '#444') + line('M5 14h6', '#444', 2),
    line: line('M3 14L14 3', blue, 1.5) + dot(2.5, 14, 1.2, blue) + dot(14, 2.5, 1.2, '#77aee2'),
    blockmove: blockA + blockArrow + box(10, 10, 5, 5, rose, '#5b1c18'),
    blockrot: blockA + line('M7 3q5 0 6 5') + dashed('M2 8v5h6') + box(10, 10, 5, 5, rose, '#5b1c18'),
    blocksmall: box(0, 1, 4, 4, green, '#5c6440') + blockArrow + box(9, 9, 6, 6, rose, '#5b1c18'),
    blockred: box(0, 1, 5, 5, rose, '#5b1c18') + blockArrow + box(10, 10, 5, 5, rose, '#5b1c18'),
    blockpage: blockA + line('M6 2l3 3') + pageE(6.5, 4.5),
    blockstar: blockA + line('M6 4l3 3') + pageE(6.5, 4.5) + star(13, 3),
    blockcube: blockA + blockArrow + cube(7, 6, 9),
    blockcubestar: blockA + blockArrow + cube(7, 6, 9) + star(13, 3),
    eraser: fill('M1 11l8-7h6l-7 8H2z', '#fff', '#3f6793', .7) + fill('M8 12l7-8v3l-6 6-7 0v-1z', '#7aa6d2') + line('M0 15q3-2 5 0M12 11l3-1', '#222', .7),
    select: line('M1 7L13 1', '#555', 1.6) + hand(4, 3),
    nohand: hand(3, 3) + line('M1 1l14 14M15 1L1 15', '#333', 1),
    texthand: word(1, 15, 'T', 12, '#c05040', 'Liberation Serif') + hand(6, -1),
    dimred: line('M1 2v12M15 2v12M2 4h12') + fill('M1 4l4-2v4zM15 4l-4-2v4z', '#000') + line('M2 15V8h5v3h7v4', '#ee5522', 1.6),
    abc: box(1, 2, 14, 12, '#fff', '#333') + word(2, 9, 'Abc', 6, '#c44436') + dashed('M4 12h6', red, 1, '1 1') + dot(1, 14, 1, '#222'),
    dashsel: dash(1, 1, 14, 14) + line('M4 4l6 7M12 3v10', '#666', 1.6),
    dashline: dash(1, 3, 12, 12) + line('M4 12l9-9', '#444', 2) + box(2, 10, 4, 4, '#fff', '#111') + box(11, 1, 4, 4, '#fff', '#111'),
    dashcross: dash(1, 2, 9, 10) + line('M3 4l10 10M6 6h9', '#555', 2),
    dashcube: dash(1, 2, 11, 12) + box(2, 9, 3, 3, '#fff', '#111') + box(9, 1, 3, 3, '#fff', '#111') + cube(7, 6, 9),
    dashpage: dash(1, 1, 14, 14) + page(4.5, 2.5, 7, 10),
    dashE: dash(1, 1, 14, 14) + pageE(3.5, 2.5),
    dashcube2: dash(1, 1, 14, 14) + cube(3, 3, 10),
    cross: line('M3 15L14 4M3 4l9 9', '#444') + dashed('M5 4h9M2 10h9'),
    hands: hand(-1, -1) + hand(7, 5) + line('M13 1L3 14', '#444', 2),
    selpt: box(0, 4, 4, 4, '#fff', '#111') + hand(5, 3) + line('M4 6l9-4', '#555', 2),
    cursorbox: fill('M4 1v10l3-2 2 3 1-1-1-3h3z', '#fff', '#888') + dash(6, 10, 8, 5),
    cursor: fill('M4 1v12l3-3 2 5 2-1-2-5h4z', '#fff', '#65788c'),
    edit: word(0, 7, 'Edit', 8, '#24486c', 'Liberation Serif') + line('M0 8.5h16', '#24486c'),
    poly: line('M2 14V4l5 2 6-4-6 6 8 2v4H2', '#685fb0', 1.4),
    blocks: box(0, 2, 5, 5, green, '#5c6440') + line('M5 6l5 5') + box(3, 6, 4, 4, rose, '#5b1c18') + box(8, 10, 5, 5, rose, '#5b1c18'),
    rect: '<rect x="1" y="3" width="14" height="10" fill="#dcecff" stroke="#2468c0" stroke-width="1.5"/>',
    corner: fill('M1 1h14v5H6v9H1z', '#b84a3c', '#822c20') + dashed('M3 3h11M3 3v11', '#f2c0b0', 2, '1 2'),
    gearring: ring(8, 8, 5, '#3a6680', 2) + line('M8 0v16M0 8h16', '#3a6680') + `<circle cx="8" cy="8" r="7" fill="none" stroke="#3a6680" stroke-dasharray="2 2"/>`,
    circle: ring(8, 8, 6.5, '#d040c0', 2),
    arcdim: line('M1 3q10-4 8 5-1 5-8 6', '#e64822', 2) + line('M2 9l5-5M13 8v7M9 15h6', '#111'),
    arc: line('M1 2q11 0 12 12', '#2f9440', 2),
    stepdim: line('M3 1v14M0 2h6M0 14h6') + line('M7 2h3v6h-2v6h5', '#e64822', 2),
    ellipse: '<ellipse cx="8" cy="8" rx="7" ry="5" transform="rotate(-30 8 8)" fill="none" stroke="#1d9da5" stroke-width="2"/>',
    five: ring(4, 8, 4, '#c44436') + word(2, 11, '5', 7, '#c44436') + line('M9 7h7M9 11h7M10 4h4v3M10 11v3h4v-3', '#c44436', 1),
    text: word(2, 15, 'T', 18, '#c04b3e', 'Liberation Serif'),
    ring: fill('M1 6q7-5 14 0v5q-7 5-14 0z', '#4da055', '#206b2c') + '<ellipse cx="8" cy="6" rx="3" ry="1.5" fill="#d8ead8"/>' + line('M4 9v4M12 9v4', '#206b2c'),
    camera: fill('M1 14V4h4l1-2h9v12z', '#fff', '#111') + ring(8, 9, 2.5, '#222'),

    ptxy: word(0, 7, 'x/y', 7, '#a33') + dashed('M3 13h10V3', '#a33', 1, '2 2'),
    ptcircle: ring(8, 8, 6, '#a22', 2) + dot(8, 8, 2, '#257'),
    ptquad: '<circle cx="8" cy="8" r="6" fill="none" stroke="#a22" stroke-dasharray="4 3"/>' + dot(8, 2, 1.5, '#257') + dot(8, 14, 1.5, '#257') + dot(2, 8, 1.5, '#257') + dot(14, 8, 1.5, '#257'),
    ptarc: line('M13 13q-8 3-10-4 0-7 7-7 4 1 3 8', '#a22', 2) + dot(13, 13, 2, '#257'),
    ptcross: line('M1 1l14 14M15 1L1 15', '#a22', 1.5) + dot(8, 8, 2, '#257'),
    ptline: line('M2 2l12 12', '#a22', 1.5) + dot(2, 2, 2, '#257') + dot(14, 14, 2, '#257'),
    ptperp: line('M2 2l7 7M15 2L4 14', '#a22', 1.5) + dot(8, 8, 2, '#257'),
    ptgrid: dashed('M1 2h14M3 7h10M1 12h4M8 12l4 4', '#a22', 2, '3 2') + dot(9, 2, 2, '#257'),
    ptmid: line('M2 2l12 12', '#a22', 1.5) + dot(8, 8, 2, '#257'),
    ptpar: line('M1 4l11 11M5 1l10 10', '#a22', 1.5) + dot(8, 8, 1, '#257'),
    pttan: line('M2 1v6l9 8M2 8q8 2 7-5', '#a22', 1.5) + dot(13, 3, 2, '#257'),
    ptdiv: line('M2 14L14 2M2 8l6 6M8 3l5 4', '#a22', 1.5) + dot(8, 8, 2, '#257'),
    pen: fill('M10 6l3-5 4 2-4 9-4 3z', '#e0c060', '#8a7440') + line('M0 15h8', '#a22'),

    stretch: line('M3 14L15 2', blue, 1.5) + line('M1 7l6-6M1 4v3h3M4 1h3v3', '#111') + dot(3, 14, 1.5, blue),
    stretch2: line('M2 12l6-6 2 6 5-1', blue, 1.5) + line('M1 3l5 5M13 1L8 6M1 6V2h4M10 1h4v4', '#111'),
    cutline: dashed('M3 1v14', red, 2, '3 1') + line('M8 1l5 9M14 1L9 10', '#4676a8', 2) + ring(9, 12, 2, blue) + ring(13, 12, 2, blue),
    reshape: line('M2 11q0-8 6-9h6', red, 1.5) + line('M5 14l4-4 6 3', blue, 1.5) + line('M10 4v5M8 7l2 2 2-2', '#111'),
    addpt: line('M1 14l6-5h8', blue, 1.5) + line('M4 1v6M1 4h6', '#000', 2),
    delpt: line('M4 14L15 3', blue, 1.5) + line('M1 4h5', '#000', 2),
    updown: line('M4 3v12', red, 2) + fill('M1 5l3-4 3 4z', red) + line('M12 1v11', blue, 2) + fill('M9 11l3 4 3-4z', blue),
    plusminus: word(1, 7, '+/-', 9) + dashed('M0 10h16M0 14h16', '#345', 2, '5 2'),
    trim: line('M3 2l12 12') + line('M0 9h7', blue, 1.5) + dashed('M9 9h7', red, 2),
    trim2: line('M2 14l7-7', blue, 1.5) + dashed('M9 7l5-5', red, 2) + line('M9 2v12'),
    trimx: line('M2 14l6-6 6 6', blue, 1.5) + dashed('M2 2l6 6 6-6', red, 2),
    trimy: line('M2 14L7 3l8 7M13 1v14') + line('M2 2l4 4', blue, 1.5) + dashed('M12 11l4 4', red, 2),
    fillet1: fillet + line('M14 4v8M2 2v3'),
    fillet2: fillet + dottedRed,
    fillet3: fillet + line('M14 4v8M6 13h3'),
    fillet4: line('M5 15q0-8 10-8', blue, 1.5) + dottedRed + dashed('M5 1v7', red, 2),
    cubeleft: cube(1, 1, 14, '#bb3a34', '#7e9a64', '#b5c897'),
    cuberight: cube(1, 1, 14, '#86a26c', '#b8332f', '#b5c897'),
    cubetop: cube(1, 1, 14, '#86a26c', '#66834c', '#cf4640'),

    office: box(1, 1, 14, 14, '#222') + box(2, 2, 5, 5, '#d33') + box(9, 2, 5, 5, '#36b') + box(2, 9, 5, 5, '#eb3') + box(9, 9, 5, 5, '#7b4'),
    globe: dot(8, 8, 7, '#307796', '#142f42') + line('M2 5q5-4 8 0M4 13q6-5 10-2', '#8fc4cf', 2) + word(4, 13, '?', 13, '#fff'),
    mail2: box(1, 3, 14, 10, '#fff8b0', '#222') + line('M1 3l7 6 7-6M1 13l5-5M15 13l-5-5'),
    calendar: box(1, 1, 14, 13, '#fff', '#333') + box(1, 1, 14, 3, '#26408f') + box(10, 6, 3, 3, '#fff', '#c22'),
    task: box(2, 2, 12, 13, '#fff', '#222') + box(5, 0, 6, 3, '#eee', '#222') + line('M5 8l2 4 5-6', '#c22', 2),
    card: box(1, 3, 14, 10, '#fff', '#222') + box(3, 5, 4, 5, '#9bd', '#245') + line('M9 6h5M9 8h5M3 12h9', '#245'),
    journal: page(1.5, 4.5, 6, 10) + page(8.5, 4.5, 6, 10) + ring(10, 4, 3, '#222') + line('M10 2v2h2'),
    note: fill('M1 6l11-5 3 9-11 5z', '#ffe477', '#6d5a10') + dashed('M4 7l8-3M5 10l8-3'),
    word: tile('#1f458c', 'W'), excel: tile('#2b7c36', 'X'), ppoint: tile('#d24726', 'P'), outlook: tile('#84700f', 'O'), access: tile('#8a1a20', 'A'),
    expand: tile('#2565b8', '') + line('M5 5l7 7M5 9V5h4', '#fff', 2),

    layer: page(1.5, 1.5, 10, 13) + box(7, 11, 5, 4, '#bdd4ea', '#345') + word(15, 7, 'B', 7) + word(15, 15, 'S', 7),
    partfolder: fill('M4 2h4l1 2h5v11H4z', '#f0d684', '#8f7931') + box(10, 11, 4, 3, '#e2c568', '#111'),
    part: cube(4, 0, 8) + cube(0, 7, 9) + cube(8, 7, 9) + line('M18 5l7 10', '#7c2419', 2) + fill('M14 7l5-6 4 1-2 2-3 5z', '#6e7626', '#3c4218'),
    temple: line('M1 6l12-5 12 5zM2 8h22M4 8v9M8 8v9M18 8v9M22 8v9M11 8v9M15 8v9M11 12h4M1 18h24', '#59682e', 1),

    orb: dot(8, 8, 7.5, '#245f93', '#7fa8c8') + '<ellipse cx="8" cy="4" rx="5" ry="3" fill="#7fb2d8" opacity=".6"/>' + fill('M4 5q2-1 4 0l-1 3q-2-1-4 0z', '#ee5a24') + fill('M8.5 5q2 1 4 0l-1 3q-2 1-4 0z', '#8cc63f') + fill('M3 8.5q2-1 4 0l-1 3q-2-1-4 0z', '#3fa9f5') + fill('M7.5 8.5q2 1 4 0l-1 3q-2 1-4 0z', '#fbc92c'),
    explorer: fill('M2 14V3l5-1 1 1h5l1 11z', '#f2d573') + box(3, 2, 3, 2, '#3a9c4c') + box(9, 2, 3, 2, '#3a72c4') + fill('M2 5h12v9H2z', '#fae79c') + fill('M4 15v-4q4-2 8 0v4h-2v-3H6v3z', '#8cc9ea'),
    notepad: fill('M6 2h7l-4 11H3z', '#8cc6dc', '#dff3fa', .5) + fill('M13 2l1 11-1 1-9 0-1-1h6z', '#5997ad', '#b9dfea', .4),
    calc: box(3, 1, 10, 14, '#a8d0ec', '#4b85b4') + box(4, 2, 8, 3, '#eefaf0') + dashed('M4 7h8M4 9h8M4 11h8M4 13h8', '#fff', 1, '1.5 .7'),
    chip: dashed('M2 5l7 10M8 2l6 9', '#d8c440', 3, '1 .8') + fill('M3 4l4-3 7 9-4 5z', '#151515', '#444', .5) + dot(6, 4, .7, '#999'),
    globebook: dot(11, 9, 4.5, '#2f74b8') + fill('M9 6l4 1 1 4-3 1-2-2z', '#58a03c') + box(3, 2, 2, 12, '#e7c94c') + line('M2 2h4M2 14h4', '#e7c94c', 1),
    soccer: dot(8, 8, 7, '#eef3ea', '#4a9b38') + fill('M2 4l4 2 1 4-4 2-2-4zM8 2l5 1-3 4-3-1z', '#3f9c34') + fill('M9 8h5v4l-2 3-3-3z', '#3376c8') + fill('M11.5 8H14v4h-2.5z', '#f0c838'),
    media: box(5, 2, 9, 11, '#5c9fcd', '#9bcbe7') + box(3, 3, 9, 11, '#cde6f5', '#7cb4d6') + dot(8, 8.5, 4, '#ee6c1c') + fill('M6.5 6v5l4-2.5z', '#fff'),
    palette: fill('M2 8q1-6 8-4 6 2 5 6-2 4-7 3-5 0-6-5z', '#e08a2c', '#a45b14', .5) + dot(6, 7, 1, '#c22') + dot(9, 6, 1, '#2a6ac0') + dot(12, 8, 1, '#3a3') + line('M1 2l9 7', '#ddd', .8) + dot(9, 10, 1, '#333'),
    chrome: dot(8, 8, 6.5, '#e34a3a') + fill('M2 5l4 5 3 4q-6 1-8-5 0-2 1-4z', '#32a350') + fill('M14 6q2 8-6 8.5l3-6V6z', '#fbc82e') + dot(8, 8, 3, '#fff') + dot(8, 8, 2.3, '#4285f4'),
    edge: dot(8, 8, 7, '#1672bd') + fill('M1 8q1-7 8-7 6 1 6 7-1 3-5 2 1-4-2-5-4-1-7 3z', '#3fc6a4') + fill('M5 8q-1 6 7 5-4 3-8 0-2-3 1-5z', '#0c4c93') + dot(9, 8, 1.5, '#bfe6ea'),
    digcad: dashed('M9 2a5 5 0 1 1-.1 0', '#b87a10', 2, '2 1.5') + ring(9, 7, 3.6, '#e6a92a', 2) + line('M9 0v14M3 7h12', '#222', .4) + word(1, 15, 'D', 8, '#39602e', 'Liberation Serif'),
    jkc: word(0, 8, 'J', 8, '#e02020') + word(5, 8, 'KC', 8, '#1e8e34') + word(0, 15, 'EMU', 7, '#050505'),
    trayup: fill('M5 10l3-4 3 4z', '#fff'),
    flag: line('M3 1v14', '#fff') + fill('M3 2h5l1 1h4v6H8L7 8H3z', '#fff') + dot(11, 11, 4, '#d32f22') + line('M9 9l4 4M13 9l-4 4', '#fff'),
    network: box(5, 4, 9, 8, '#222', '#fff') + line('M2 1v4h3V1M3 5v5M7 14h6', '#fff'),
    sound: fill('M1 6h3l4-4v12l-4-4H1z', '#fff') + line('M10 5q2 3 0 6M12 3q4 5 0 10', '#ddd')
};

// where the label of a numbered icon goes
const labels = {
    num: [1, 14, 7], zoom: [7, 9, 8], edit: [6, 16, 8], blocks: [11, 7, 8],
    arcdim: [11, 7, 8], stepdim: [11, 7, 8], pen: [0, 7, 7]
};

function drawIcon(token) {
    const [names, label] = token.split(':');
    let shapes = names.split('+').map(n => icons[n]).join('');
    if (label) {
        const [x, y, size] = labels[names];
        shapes += word(x, y, label, size, '#24486c');
    }
    const wide = { layer: 22, part: 26, partfolder: 26, temple: 26 }[names] || 16;
    const h = names === 'temple' ? 19 : 16;
    return `<svg viewBox="0 0 ${wide} ${h}" aria-hidden="true">${shapes}</svg>`;
}

document.querySelectorAll('[data-icons]').forEach(bar => {
    const plain = bar.tagName === 'SPAN';
    bar.innerHTML = bar.dataset.icons.split(' ').map(token => {
        if (token === '|') return '<span class="sep"></span>';
        const state = token[0] === '~' ? 'off' : token[0] === '*' ? 'on' : '';
        const name = token.replace(/^[~*]/, '');
        if (plain) return drawIcon(name);
        return `<button class="${state}" aria-label="${name}">${drawIcon(name)}</button>`;
    }).join('');
});

const pens = ['#000', '#f00', '#ad6350', '#ff7f00', '#b848a8', '#f0f', '#ff8490', '#f3b50f',
    '#2460b8', '#8f94e6', '#25aaa5', '#919795', '#3c7c80', '#148400', '#148400', '#b89a10'];
document.getElementById('swatches').innerHTML = pens.map((c, i) =>
    `<button class="${i ? '' : 'on'}" style="--pen: ${c}" aria-label="Farbe ${i + 1}"></button>`).join('');
```
